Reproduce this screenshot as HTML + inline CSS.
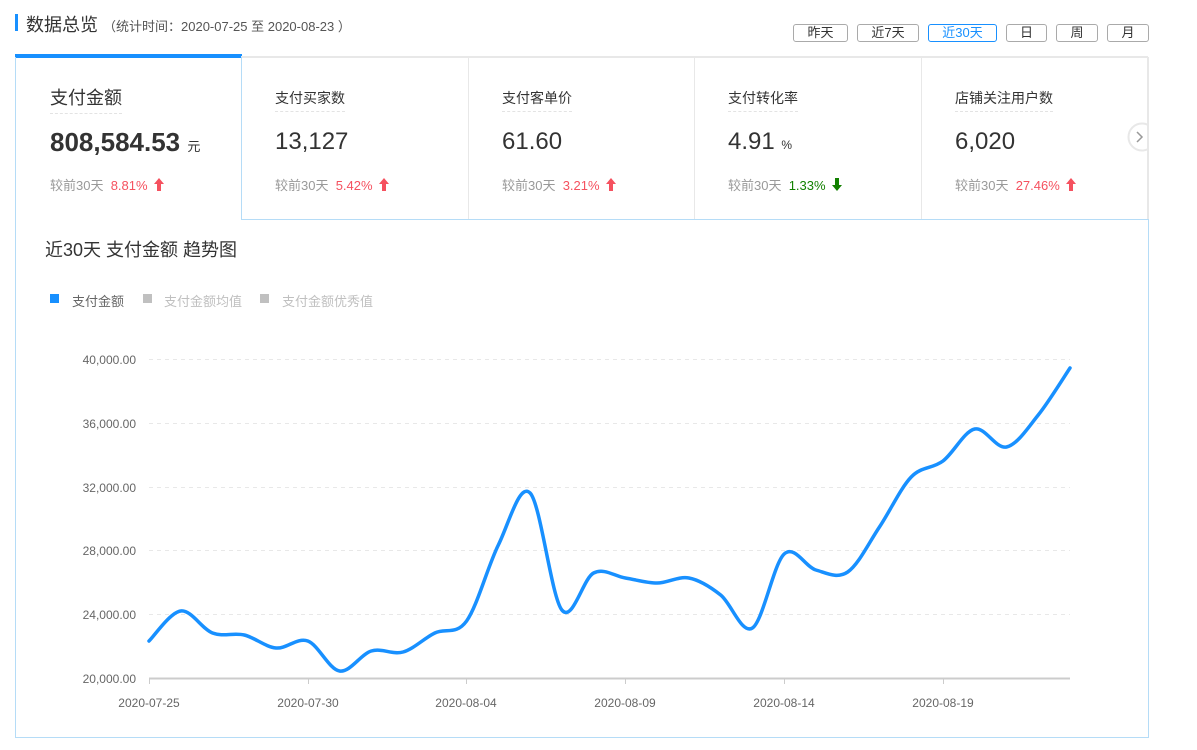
<!DOCTYPE html>
<html><head><meta charset="utf-8"><style>
*{margin:0;padding:0;box-sizing:border-box}
body{width:1197px;height:750px;background:#fff;font-family:"Liberation Sans","Noto Sans CJK SC",sans-serif;position:relative;overflow:hidden;color:#333}
.a{position:absolute;white-space:nowrap}
.btn{position:absolute;top:24px;height:18px;border:1px solid #aaa;border-radius:3px;font-size:13px;line-height:16px;text-align:center;color:#333}
.lbl{font-size:14px;color:#333;border-bottom:1px dashed #e3e3e3;padding-bottom:3px}
.val{font-size:24px;color:#333}
.cmp{font-size:13px;color:#999}
.up{color:#f5515f}
.ar{display:inline-block;vertical-align:-1px;margin-left:6px}
</style></head><body>
<div class="a" style="left:15px;top:14px;width:3px;height:17px;background:#1890ff"></div>
<div class="a" style="left:26px;top:11px;font-size:18px;color:#333">数据总览 <span style="font-size:13px;color:#555">（统计时间：2020-07-25 至 2020-08-23 ）</span></div>
<div class="btn" style="left:793px;width:55px">昨天</div>
<div class="btn" style="left:857px;width:62px">近7天</div>
<div class="btn" style="left:928px;width:69px;border-color:#1890ff;color:#1890ff">近30天</div>
<div class="btn" style="left:1006px;width:41px">日</div>
<div class="btn" style="left:1056px;width:42px">周</div>
<div class="btn" style="left:1107px;width:42px">月</div>

<div class="a" style="left:15px;top:54px;width:227px;height:4px;background:#1890ff"></div>
<div class="a" style="left:241px;top:56px;width:907px;height:2px;background:#e8e8e8"></div>
<div class="a" style="left:15px;top:57px;width:1px;height:681px;background:#b5dcf7"></div>
<div class="a" style="left:241px;top:57px;width:1px;height:163px;background:#b5dcf7"></div>
<div class="a" style="left:241px;top:219px;width:908px;height:1px;background:#b5dcf7"></div>
<div class="a" style="left:468px;top:57px;width:1px;height:162px;background:#e8e8e8"></div>
<div class="a" style="left:694px;top:57px;width:1px;height:162px;background:#e8e8e8"></div>
<div class="a" style="left:921px;top:57px;width:1px;height:162px;background:#e8e8e8"></div>
<div class="a" style="left:1147px;top:57px;width:2px;height:162px;background:#e8e8e8"></div>
<div class="a" style="left:1148px;top:219px;width:1px;height:519px;background:#b5dcf7"></div>
<div class="a" style="left:15px;top:737px;width:1134px;height:1px;background:#b5dcf7"></div>
<svg class="a" style="left:1126px;top:122px" width="21" height="31"><circle cx="16" cy="15" r="13.5" fill="#fff" stroke="#e8e8e8" stroke-width="2"/><path d="M11 10 L16 15 L11 20" fill="none" stroke="#999" stroke-width="1.5"/></svg>

<div class="a lbl" style="left:50px;top:84px;font-size:18px">支付金额</div>
<div class="a" style="left:50px;top:127px;font-size:26px;font-weight:bold;color:#333">808,584.53 <span style="font-size:13px;font-weight:normal">元</span></div>
<div class="a cmp" style="left:50px;top:175px">较前30天 &nbsp;<span class="up">8.81%</span><svg class="ar" width="10" height="13"><path d="M5 0 L10 6 L7 6 L7 13 L3 13 L3 6 L0 6Z" fill="#f5515f"/></svg></div>

<div class="a lbl" style="left:275px;top:88px">支付买家数</div>
<div class="a val" style="left:275px;top:128px">13,127</div>
<div class="a cmp" style="left:275px;top:175px">较前30天 &nbsp;<span class="up">5.42%</span><svg class="ar" width="10" height="13"><path d="M5 0 L10 6 L7 6 L7 13 L3 13 L3 6 L0 6Z" fill="#f5515f"/></svg></div>

<div class="a lbl" style="left:502px;top:88px">支付客单价</div>
<div class="a val" style="left:502px;top:128px">61.60</div>
<div class="a cmp" style="left:502px;top:175px">较前30天 &nbsp;<span class="up">3.21%</span><svg class="ar" width="10" height="13"><path d="M5 0 L10 6 L7 6 L7 13 L3 13 L3 6 L0 6Z" fill="#f5515f"/></svg></div>

<div class="a lbl" style="left:728px;top:88px">支付转化率</div>
<div class="a val" style="left:728px;top:128px">4.91 <span style="font-size:12px">%</span></div>
<div class="a cmp" style="left:728px;top:175px">较前30天 &nbsp;<span style="color:#128000">1.33%</span><svg class="ar" width="10" height="13"><path d="M5 13 L10 7 L7 7 L7 0 L3 0 L3 7 L0 7Z" fill="#128000"/></svg></div>

<div class="a lbl" style="left:955px;top:88px">店铺关注用户数</div>
<div class="a val" style="left:955px;top:128px">6,020</div>
<div class="a cmp" style="left:955px;top:175px">较前30天 &nbsp;<span class="up">27.46%</span><svg class="ar" width="10" height="13"><path d="M5 0 L10 6 L7 6 L7 13 L3 13 L3 6 L0 6Z" fill="#f5515f"/></svg></div>

<div class="a" style="left:45px;top:236px;font-size:18px;color:#333">近30天 支付金额 趋势图</div>
<div class="a" style="left:50px;top:294px;width:9px;height:9px;background:#1890ff"></div>
<div class="a" style="left:72px;top:291px;font-size:13px;color:#666">支付金额</div>
<div class="a" style="left:143px;top:294px;width:9px;height:9px;background:#c0c0c0"></div>
<div class="a" style="left:164px;top:291px;font-size:13px;color:#c0c0c0">支付金额均值</div>
<div class="a" style="left:260px;top:294px;width:9px;height:9px;background:#c0c0c0"></div>
<div class="a" style="left:282px;top:291px;font-size:13px;color:#c0c0c0">支付金额优秀值</div>

<svg class="a" style="left:0;top:0" width="1197" height="750" font-family="Liberation Sans, sans-serif" font-size="12" fill="#666">
<g stroke="#e8e8e8" stroke-dasharray="4,4">
<line x1="149" x2="1070" y1="359.5" y2="359.5"/><line x1="149" x2="1070" y1="423.5" y2="423.5"/><line x1="149" x2="1070" y1="487.5" y2="487.5"/><line x1="149" x2="1070" y1="550.5" y2="550.5"/><line x1="149" x2="1070" y1="614.5" y2="614.5"/>
</g>
<line x1="149" x2="1070" y1="678.5" y2="678.5" stroke="#ccc" stroke-width="2"/>
<g stroke="#ccc"><line x1="149.5" x2="149.5" y1="678" y2="684"/><line x1="308.5" x2="308.5" y1="678" y2="684"/><line x1="466.5" x2="466.5" y1="678" y2="684"/><line x1="625.5" x2="625.5" y1="678" y2="684"/><line x1="784.5" x2="784.5" y1="678" y2="684"/><line x1="943.5" x2="943.5" y1="678" y2="684"/></g>
<g text-anchor="end"><text x="136" y="364">40,000.00</text><text x="136" y="428">36,000.00</text><text x="136" y="492">32,000.00</text><text x="136" y="555">28,000.00</text><text x="136" y="619">24,000.00</text><text x="136" y="683">20,000.00</text></g>
<g text-anchor="middle"><text x="149" y="707">2020-07-25</text><text x="308" y="707">2020-07-30</text><text x="466" y="707">2020-08-04</text><text x="625" y="707">2020-08-09</text><text x="784" y="707">2020-08-14</text><text x="943" y="707">2020-08-19</text></g>
<path id="ln" d="" fill="none" stroke="#1890ff" stroke-width="3.5" stroke-linejoin="round" stroke-linecap="round"/>
</svg>
<script>
var ys=[641,611,633,635,648,641,671,651,652,633,621,545,493,610,573,578,583,578,595,628,554,570,572,527,477,461,429,447,415,368];
var p=ys.map(function(y,i){return [149+i*(921/29),y]});
var d="M"+p[0][0]+","+p[0][1];
for(var i=0;i<p.length-1;i++){var p0=p[i-1]||p[i],p1=p[i],p2=p[i+1],p3=p[i+2]||p2;
d+=" C"+(p1[0]+(p2[0]-p0[0])/6)+","+(p1[1]+(p2[1]-p0[1])/6)+" "+(p2[0]-(p3[0]-p1[0])/6)+","+(p2[1]-(p3[1]-p1[1])/6)+" "+p2[0]+","+p2[1];}
document.getElementById("ln").setAttribute("d",d);
</script>
</body></html>
